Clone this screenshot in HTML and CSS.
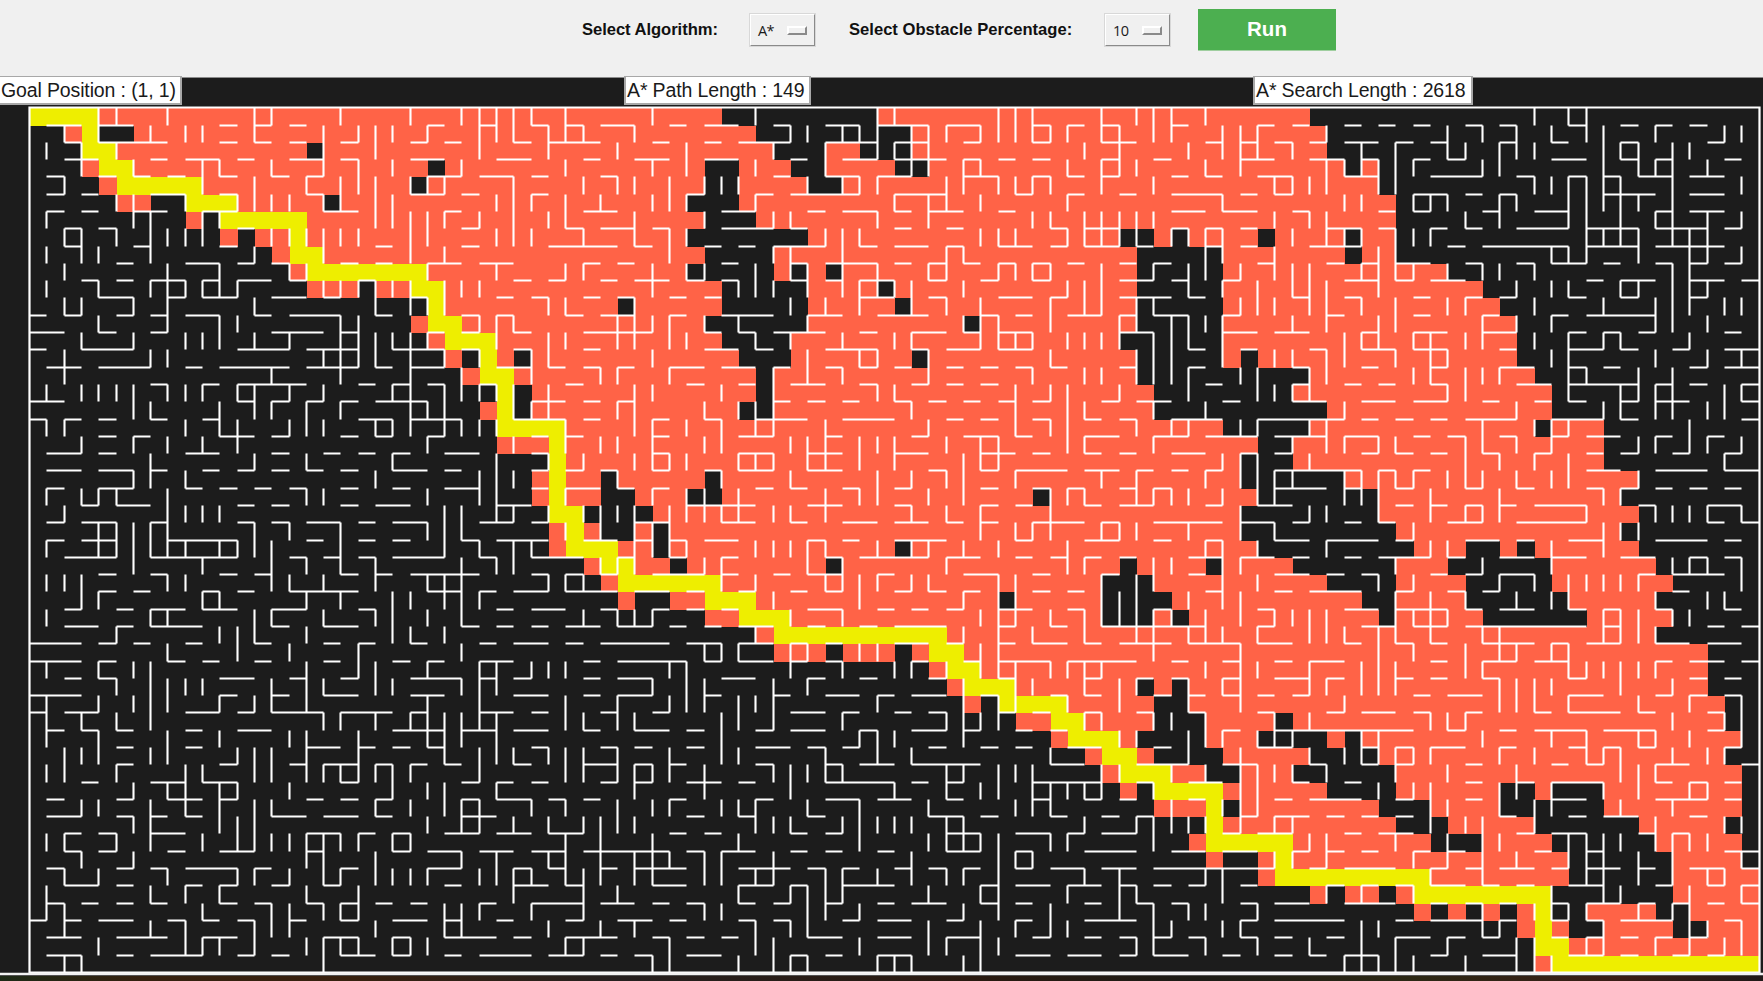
FILE: index.html
```html
<!DOCTYPE html>
<html lang="en">
<head>
<meta charset="utf-8">
<title>Maze Search</title>
<link rel="stylesheet" href="styles.css">
</head>
<body>
<header class="toolbar">
  <label class="caption algo">Select Algorithm:</label>
  <button class="option first"><span>A*</span><i class="knob"></i></button>
  <label class="caption pct">Select Obstacle Percentage:</label>
  <button class="option second"><span>10</span><i class="knob"></i></button>
  <button class="run">Run</button>
</header>
<main class="board">
  <svg class="maze" id="maze" viewBox="0 77 1763 899" width="1763" height="899"></svg>
  <div class="status goal"><span>Goal Position : (1, 1)</span></div>
  <div class="status path"><span>A* Path Length : 149</span></div>
  <div class="status search"><span>A* Search Length : 2618</span></div>
</main>
<footer class="desk"></footer>
<script src="maze.js"></script>
</body>
</html>
```
FILE: styles.css
```css
* { box-sizing: border-box; }
body {
  margin: 0;
  width: 1763px;
  height: 981px;
  overflow: hidden;
  background: #1c1c1c;
  font-family: "Liberation Sans", Arial, sans-serif;
}
.toolbar {
  display: flex;
  align-items: flex-start;
  height: 77px;
  padding: 9px 0 0 582px;
  background: #f0f0f0;
}
.caption {
  font-weight: bold;
  font-size: 16.6px;
  line-height: 20px;
  margin-top: 11px;
  color: #111;
  white-space: nowrap;
}
.algo { width: 167px; letter-spacing: -.05px; }
.pct { width: 255px; }
.option {
  display: flex;
  align-items: center;
  justify-content: space-between;
  width: 67px;
  height: 34px;
  margin: 4px 0 0;
  padding: 0 7px;
  border: 2px solid;
  border-color: #fff #8a8a8a #8a8a8a #fff;
  outline: 1px solid #d8d8d8;
  outline-offset: -1px;
  background: #f0f0f0;
  font: 14.5px "Open Sans", "Noto Sans", sans-serif;
  color: #1a1a1a;
}
.option span { display: inline-block; letter-spacing: -.6px; }
.first { margin-right: 33px; }
.second { margin-right: 27px; }
.knob {
  width: 20px;
  height: 9px;
  border: 2px solid;
  border-color: #fff #8a8a8a #8a8a8a #fff;
  background: #f0f0f0;
}
.run {
  width: 138px;
  height: 42px;
  padding: 0 0 2px;
  border: 0;
  border-bottom: 1px solid #9fce9f;
  background: #4caf50;
  color: #fff;
  font: bold 20.5px "Liberation Sans", Arial, sans-serif;
}
.board { position: relative; height: 899px; background: #1c1c1c; }
.maze { display: block; }
.status {
  position: absolute;
  top: -1px;
  height: 29px;
  padding-left: 1px;
  border: solid #a8a8a8;
  border-width: 1px 2px 2px;
  background: #fff;
  color: #1a1a1a;
  font-size: 19.5px;
  letter-spacing: -.13px;
  line-height: 26px;
  white-space: nowrap;
}
.goal { left: 0; width: 182px; border-left: 0; }
.path { left: 624px; width: 187px; }
.search { left: 1253px; width: 220px; }
.desk {
  height: 5px;
  background: linear-gradient(90deg, #1d2a16, #35200f 8%, #38210f 20%, #26201f 35%, #2a1a10 55%, #1d1c16 68%, #2c2814 80%, #3a1d16 92%, #201918);
}
```
FILE: maze.js
```js
// Horizontal walls: one entry per grid line (1..49), as column ranges.
const H = [
"1-3 4-6 11-12 13-14 15-16 23-24 26-27 29-30 31-32 33-35 37-38 39-41 43-44 46-48 49-52 53-55 58-59 60-61 62-63 66-67 71-72 73-74 76-77 78-79 80-81 83-84 85-86 89-90 92-93 94-95 96-97",
"2-3 4-8 11-12 13-14 15-16 18-19 22-23 24-25 28-29 30-33 36-37 39-40 41-44 46-49 50-52 54-55 58-59 62-64 68-69 70-71 72-73 74-75 76-78 79-80 81-82 85-86 88-89 92-93 97-98",
"2-4 7-8 9-11 12-13 15-17 18-19 22-24 27-29 32-33 35-37 39-41 44-45 47-49 50-53 54-55 56-57 58-59 62-63 65-66 70-72 74-76 77-78 80-81 82-83 88-90 92-93 94-95 98-99",
"1-2 4-5 6-7 8-9 11-12 14-15 16-17 23-25 26-28 29-30 33-34 43-44 46-48 49-51 54-56 58-59 60-61 62-63 66-67 68-69 71-73 76-78 81-84 86-87 89-90 91-92 93-95 96-98",
"1-2 3-4 7-9 11-12 16-17 22-24 25-26 29-30 38-39 42-43 44-48 50-53 57-58 60-61 63-64 66-69 70-71 72-73 80-82 83-84 85-86 91-94 96-98",
"1-2 3-4 6-8 10-12 17-19 24-25 32-34 40-42 45-46 47-49 50-51 52-54 56-57 66-68 69-71 73-74 78-79 80-81 84-85 87-89 94-95 96-98",
"2-3 4-5 12-13 25-26 31-32 33-35 36-37 40-43 44-45 50-51 53-54 59-60 61-63 66-67 68-69 70-71 75-77 78-79 81-82 83-84 86-89 90-93 94-97 98-99",
"2-3 6-7 11-12 20-21 25-26 30-34 35-36 39-40 41-42 43-46 48-49 50-52 53-54 56-58 59-60 61-63 64-65 68-69 70-71 74-77 82-83 84-89 90-93 94-98",
"5-6 9-11 12-13 14-15 18-19 20-21 23-25 26-28 32-33 34-35 40-41 44-45 46-49 50-51 52-53 54-55 56-57 58-59 60-61 63-64 65-66 71-72 75-76 77-78 79-81 83-84 86-87 88-90 91-92 94-95 96-97 98-99",
"3-4 5-6 7-9 10-11 12-14 15-16 19-20 28-29 30-31 33-34 35-37 38-39 40-41 44-45 46-47 48-50 52-53 55-56 58-59 63-65 66-67 69-70 76-78 79-80 81-83 90-91 92-94 96-98 99-100",
"4-6 8-9 10-12 14-16 17-18 22-23 27-28 29-30 32-33 34-35 37-38 39-40 48-50 52-53 56-58 59-60 63-66 67-68 73-74 76-77 80-81 83-84 85-86 89-90 92-93 96-97",
"0-1 2-3 5-6 7-8 9-11 13-14 15-18 20-21 25-26 27-28 31-32 33-35 37-38 40-43 45-47 49-52 55-56 57-58 60-62 63-64 65-67 69-70 75-76 80-81 84-85 88-89 90-94",
"0-2 4-5 7-8 14-17 18-19 23-24 25-26 28-29 32-36 39-40 41-42 43-46 48-49 51-53 54-55 56-58 63-65 69-71 72-74 77-78 80-82 84-86 89-90 91-92 93-94 98-99",
"0-1 3-6 12-15 16-19 21-24 25-26 28-29 32-33 39-41 42-43 46-49 51-52 53-55 56-58 67-68 70-71 74-75 77-79 80-82 85-86 89-91 92-93 95-96 98-100",
"1-3 4-7 9-10 11-15 16-19 20-21 22-24 27-29 30-31 32-33 34-35 37-39 40-42 43-44 46-47 48-49 50-51 53-54 55-56 57-58 59-60 63-64 67-68 73-74 77-78 81-82 85-87 89-90 91-92 96-97 98-100",
"7-8 10-11 12-16 19-20 21-22 23-24 26-27 31-32 38-39 41-42 44-46 48-49 51-52 53-54 55-56 68-69 73-74 76-77 78-79 81-82 86-88 89-93 94-95 96-97 99-100",
"0-2 12-13 14-15 16-17 18-19 20-23 29-31 32-33 34-35 43-44 45-46 47-48 50-51 52-53 54-55 56-57 58-59 62-63 64-66 69-70 73-75 77-79 80-82 84-85 87-88 89-90 92-93 94-96 99-100",
"0-1 2-3 4-5 7-8 10-11 19-21 22-25 28-31 32-33 36-37 39-40 42-45 47-50 53-54 55-56 58-59 61-62 63-64 66-69 71-76 77-78 79-80 81-82 83-86 88-91 92-93 99-100",
"4-5 6-7 11-13 14-15 18-19 20-21 23-24 29-30 31-32 36-37 41-43 46-47 51-52 54-56 57-58 61-63 65-67 68-71 72-75 76-78 80-81 82-83 85-86 88-89 90-92 94-95 97-98",
"1-3 4-5 9-11 14-15 17-18 19-20 21-22 24-26 29-30 36-37 41-43 45-47 50-52 55-57 58-59 61-62 63-64 66-68 70-71 72-73 77-78 79-80 81-82 84-85 87-88 90-91 92-93 95-96 98-99",
"1-3 4-6 7-8 10-11 12-13 14-15 16-17 18-19 21-23 24-25 29-30 31-32 33-34 36-37 39-40 41-43 45-47 52-53 55-56 57-60 61-63 64-65 66-67 68-69 72-77 78-79 80-81 90-92 94-97 98-100",
"1-2 4-6 9-10 11-12 13-14 15-16 18-19 21-22 24-26 29-30 31-33 34-35 36-37 42-43 44-45 47-48 50-51 55-56 58-59 60-61 63-64 65-66 72-75 76-77 79-80 83-84 86-87 90-91 92-93 94-95 96-97 98-99",
"3-4 5-7 12-13 14-15 18-19 20-22 27-29 38-42 45-47 50-51 55-56 57-58 61-62 63-65 68-69 71-73 79-80 81-82 83-84 85-86 87-90 93-94 97-99",
"1-2 3-5 7-8 12-13 14-15 16-18 19-20 21-23 26-28 29-30 35-37 40-42 44-45 47-49 50-52 53-54 55-56 58-61 62-63 65-69 70-72 73-74 76-77 78-79 82-84 86-90 97-98 99-100",
"1-2 3-5 8-12 16-17 19-20 21-22 25-26 27-30 32-34 35-36 37-38 39-41 45-46 47-48 50-53 57-58 61-63 65-66 68-69 72-74 75-78 79-80 83-85 86-87 89-91 94-97 98-99",
"2-5 7-12 15-16 17-18 19-20 21-24 26-27 29-32 34-35 37-38 40-41 46-47 48-52 53-55 57-58 59-60 61-62 63-64 67-69 70-72 73-74 76-77 78-81 82-83 85-87 88-90 92-94 96-97 98-99",
"4-5 7-8 11-12 13-14 18-19 20-21 22-26 29-30 31-32 33-34 36-39 40-41 43-44 45-47 49-50 54-56 58-59 62-63 67-68 72-74 75-76 77-78 81-82 83-84 85-87 93-94 95-98",
"4-5 6-7 10-11 12-13 15-19 23-25 26-27 28-30 31-34 35-37 38-39 41-42 44-45 46-47 50-51 52-53 54-55 58-59 60-61 68-69 72-73 74-77 79-80 82-83 84-85 95-96",
"2-3 5-6 7-9 10-12 14-16 19-20 27-28 29-31 33-34 36-37 38-39 40-41 45-47 49-50 51-52 53-54 56-58 60-61 65-66 71-72 76-78 79-82 83-84 85-87 89-90 91-92 94-95 98-99",
"2-4 5-6 7-10 14-15 17-19 25-26 27-28 29-30 31-33 34-36 37-38 39-40 41-43 45-46 48-49 50-53 56-57 59-60 62-68 71-72 77-79 80-82 83-90 91-92 97-98 99-100",
"0-3 4-5 6-7 9-10 13-14 17-18 19-20 22-23 26-27 28-30 31-32 33-37 38-40 41-43 44-45 46-47 50-52 53-54 56-57 58-60 61-62 63-66 67-70 71-73 76-77 79-80 81-82 84-87 88-89 90-92 94-96 97-99",
"0-3 4-5 8-9 10-11 13-14 17-18 21-22 23-24 26-28 32-33 34-38 39-40 41-43 44-45 46-47 51-52 54-55 56-59 60-64 66-67 69-70 72-73 74-76 81-82 84-86 87-89 94-95 96-98 99-100",
"2-3 4-5 11-13 15-16 18-19 22-25 26-27 28-29 32-33 34-36 40-42 45-46 48-49 52-53 56-57 61-62 64-65 66-67 69-70 72-74 75-76 79-80 81-82 84-85 89-90 96-97 98-99",
"0-3 11-12 14-15 17-19 22-24 28-30 32-33 34-36 39-40 43-44 46-48 49-50 51-53 55-56 59-60 61-62 65-66 67-68 69-70 71-72 73-74 80-81 82-84 89-91 94-95 96-97 98-99",
"0-1 2-4 9-11 12-13 14-17 18-21 22-23 26-28 29-30 33-34 36-37 44-46 47-48 50-51 52-53 56-57 58-59 61-62 64-65 67-68 71-72 75-76 77-79 80-81 83-84 87-88 89-92 93-94 97-98",
"1-2 3-4 5-6 9-10 12-14 21-24 25-27 28-30 32-33 35-37 38-39 42-43 44-46 48-49 51-53 54-55 57-58 59-60 69-70 72-80 82-83 85-86 87-90 91-94 97-98",
"5-6 9-10 16-18 19-20 21-22 23-24 29-30 33-34 35-36 38-39 42-44 45-46 47-48 52-53 55-56 57-58 60-62 65-66 71-73 77-78 79-80 81-83 85-86 89-90 91-92 93-94 98-99",
"5-6 11-12 15-16 17-19 20-21 22-23 24-25 28-29 32-34 35-36 37-38 42-43 46-47 48-50 51-55 59-61 64-67 69-71 74-75 77-78 79-80 83-84 88-89 90-91 94-96 99-100",
"3-4 7-9 10-12 18-19 25-26 27-28 29-30 33-34 35-36 38-40 41-42 46-50 51-52 53-54 58-62 64-65 67-69 73-74 76-77 83-84 86-87 88-91 94-95 96-97 98-99",
"1-2 5-6 8-10 11-12 16-17 18-19 20-21 25-26 27-29 30-31 32-33 37-38 42-43 46-48 49-51 53-54 58-59 61-62 63-64 67-68 72-73 74-77 79-80 83-84 88-90 94-97 98-99",
"1-3 5-6 7-8 9-10 14-16 17-19 20-21 25-27 38-39 41-42 45-46 52-54 55-56 59-60 62-63 64-65 70-71 72-74 75-76 77-78 79-80 85-86 89-90 91-93 96-97",
"2-3 4-5 7-9 16-18 19-20 21-22 24-26 27-29 30-32 37-38 39-40 44-45 46-47 53-55 57-59 60-61 62-64 69-70 71-73 76-77 78-80 86-87 88-90 93-94 95-96",
"2-3 4-5 8-9 11-13 16-17 21-22 23-25 26-28 29-31 32-37 38-39 40-42 44-45 46-47 49-50 53-55 57-58 61-64 66-68 69-71 73-74 75-76 77-78 80-81 82-83 87-88 90-91 98-100",
"1-2 5-6 7-8 9-12 13-14 18-19 23-25 28-29 30-31 33-34 35-38 41-44 45-46 47-48 50-51 52-53 54-55 57-58 59-61 62-64 65-72 74-75 76-79 81-82 83-84 85-87 88-89 90-92 93-94 96-98 99-100",
"2-4 5-6 9-10 11-12 14-15 17-18 24-25 28-30 31-32 36-38 41-43 44-45 47-50 55-56 57-59 60-62 63-64 65-66 67-68 70-71 75-76 77-78 79-80 81-83 84-85 86-87 89-91 94-95 97-98 99-100",
"1-2 3-4 5-6 7-8 11-12 13-14 16-17 18-19 20-21 22-23 26-27 29-32 33-35 36-37 38-39 41-42 43-44 46-47 49-50 51-53 55-56 57-58 61-62 64-65 66-67 70-71 72-74 76-79 81-82 83-84 85-86 88-89 90-92 93-94 95-96 97-98 99-100",
"0-1 2-3 4-6 8-9 10-11 12-13 15-16 18-19 21-23 24-25 27-28 31-32 34-36 37-38 41-42 43-44 47-48 49-51 53-54 57-58 61-64 70-71 72-76 79-80 81-84 85-86 88-89 90-91 92-95 98-99",
"1-3 5-8 10-12 17-19 21-22 24-27 28-29 31-34 36-37 38-39 40-41 45-47 49-51 53-55 58-59 61-62 63-64 65-66 67-68 70-71 72-73 75-76 79-81 82-83 84-85 88-89 90-91 92-93 94-95 96-97",
"1-3 5-6 7-10 12-13 14-15 18-20 21-22 24-25 26-29 30-32 33-34 35-36 38-40 44-45 46-47 49-51 57-59 60-62 63-64 65-67 69-70 72-73 74-75 76-78 81-82 84-86 89-91 92-93 95-96 97-98"
];

// Vertical walls: one entry per row (0..49), as grid line numbers.
const V = [
"4 5 8 13 14 18 22 25 26 27 28 29 31 36 42 49 50 56 57 58 62 64 65 66 68 87 89 90",
"2 4 7 9 10 13 17 19 20 21 23 26 27 28 30 31 32 35 44 45 47 48 49 51 52 53 55 56 57 58 59 60 62 63 65 66 69 70 71 75 82 84 86 88 90 91 94 98 99",
"1 3 5 17 20 26 30 34 38 43 46 49 50 51 52 61 63 67 69 70 71 73 77 79 82 83 85 86 87 91 92 93 95 96",
"3 6 10 11 14 17 19 21 25 31 36 38 42 46 51 52 54 55 60 62 63 64 68 70 75 76 77 78 79 80 84 85 91 93 94 95 97",
"2 10 13 16 18 19 20 22 23 24 28 32 34 35 37 39 40 41 45 47 48 49 53 54 56 57 58 59 62 65 72 73 74 75 78 79 87 88 89 90 91 92 95 99",
"5 6 9 12 13 14 15 17 18 20 21 27 28 29 31 33 36 37 38 42 50 52 53 55 60 69 76 77 80 81 82 85 86 89 90 91 92 93 95",
"1 6 7 10 11 20 21 22 23 24 26 28 30 31 35 39 43 44 49 52 58 59 61 62 63 64 65 72 74 75 83 85 89 90 92 94 95 97 99",
"2 3 5 7 8 9 10 14 15 16 17 18 19 22 23 27 28 29 32 35 37 38 46 47 48 55 56 57 60 61 62 63 64 66 67 68 69 73 75 76 77 79 80 81 90 91 92 93 95 96 97",
"1 3 4 7 13 17 22 24 37 43 44 47 53 54 68 69 72 78 79 88 89 90 93 96 97 99",
"2 8 11 15 16 23 27 31 32 36 38 39 42 44 45 47 49 52 53 56 57 58 59 62 65 67 68 70 72 73 74 77 78 79 80 82 84 85 87 95 96",
"1 4 7 8 9 10 11 12 17 18 19 20 21 22 24 25 26 36 41 42 43 45 47 48 49 50 51 54 60 61 62 67 69 71 73 74 75 78 86 88 89 92 93 95 96 97",
"2 3 6 8 13 20 22 23 24 30 31 35 44 46 48 51 53 55 59 61 62 64 65 70 71 72 74 75 77 79 82 83 87 91 94 95 96 98 99",
"4 8 11 12 18 19 26 27 28 34 35 36 37 39 41 45 54 55 56 59 63 64 66 67 68 69 73 75 78 79 84 86 88 94 95 97",
"3 6 9 10 11 13 15 18 19 20 21 22 23 27 30 31 34 35 37 38 42 44 47 50 51 55 56 57 58 60 61 62 63 65 66 67 69 76 77 78 80 81 83 84 87 89 91 92 96",
"2 7 8 17 18 19 20 22 24 26 29 30 36 45 48 49 52 59 64 65 66 69 72 73 75 76 79 81 82 88 89 94 97 99",
"2 14 18 22 25 29 33 34 37 43 45 47 52 58 61 62 64 65 66 67 70 71 74 75 80 81 83 84 85 89 90 93 95",
"1 3 4 5 6 8 9 10 12 13 15 17 21 22 24 25 26 27 28 30 35 36 40 43 49 50 57 59 60 63 67 71 72 73 74 82 83 89 92 93 94 95 98 99",
"6 7 11 13 14 16 18 22 23 24 28 29 30 34 35 39 41 42 43 51 57 60 61 65 68 76 86 91 92 94 95 97 98",
"1 2 9 11 12 15 16 17 20 21 22 24 25 26 27 31 35 36 38 40 42 43 46 52 57 59 60 64 66 67 70 71 74 75 84 87 88 89 96",
"3 6 8 10 12 23 28 31 33 34 36 39 40 44 45 46 48 49 50 53 55 56 60 61 65 73 75 76 78 79 83 84 86 88 93 94 96 97 99",
"7 13 16 21 27 30 32 35 36 37 38 41 42 43 45 46 48 50 54 55 56 69 70 71 74 83 85 87 89 98",
"6 7 9 20 26 27 28 34 40 44 49 51 53 54 57 62 64 68 70 71 72 73 76 77 78 79 80 82 83 84 86 88 89 93",
"1 3 4 5 8 16 17 23 26 27 31 36 38 39 41 46 48 49 52 54 59 60 61 64 65 66 67 69 71 72 76 77 78 81 85 91 92",
"2 8 9 10 11 24 25 27 28 30 32 33 34 35 37 38 39 40 41 43 44 46 51 53 55 59 70 74 75 78 81 83 84 85 90 94 95 96 97 99",
"4 5 6 7 8 13 15 18 23 24 25 31 33 35 36 37 55 57 58 59 62 63 64 67 70 72 80 91 92 93",
"1 4 5 6 7 8 9 11 12 13 14 18 24 26 28 29 35 36 37 38 42 43 44 45 46 49 51 52 54 56 60 68 69 71 75 81 82 88 91",
"6 10 14 16 18 20 25 27 28 33 34 35 39 40 45 47 53 60 61 65 66 69 70 79 84 88 95 96 97 99",
"1 2 3 8 9 14 15 17 20 23 24 25 30 31 32 40 42 46 47 48 49 51 52 56 57 62 64 65 69 71 78 80 85 87 89 90 91 92 93 99",
"3 4 10 11 16 18 21 22 24 25 26 43 48 54 56 57 62 63 64 67 69 70 79 81 83 86 88 89 94 97 98",
"1 7 8 13 14 17 20 21 23 25 32 34 35 36 44 47 55 56 57 59 61 62 63 64 65 66 68 70 72 73 74 75 79 80 81 82 91 92 93 95 96",
"5 11 12 13 16 21 22 24 42 54 56 58 61 64 65 67 68 69 71 74 75 76 78 79 81 84 85 91 92 93 94",
"8 12 15 19 25 39 40 41 44 45 48 49 55 56 65 70 78 80 83 85 86 88 89",
"1 4 6 7 16 19 20 23 26 27 29 30 31 37 38 44 47 50 51 53 55 56 57 59 60 61 62 68 70 71 74 77 78 79 83 84 89 90 91 92 93 94",
"5 7 8 9 10 14 16 17 20 21 25 26 27 36 38 39 43 45 54 57 58 61 63 64 67 69 70 74 75 77 78 79 85 86 87 88 92 95",
"1 4 6 7 8 11 13 14 16 23 26 31 34 37 38 39 41 42 43 49 54 56 57 60 63 67 70 76 85 86 87 89 93 96 99",
"1 3 5 7 17 18 20 22 23 24 25 26 27 31 32 34 35 40 41 43 47 53 54 55 56 61 62 65 66 68 72 74 81 82 83 95 98 99",
"1 4 8 11 15 16 19 23 24 25 27 40 48 49 50 54 63 64 67 68 69 71 72 73 77 78 84 88 90 93 94 96 99",
"2 3 4 7 8 12 13 14 16 19 24 26 27 28 30 31 32 34 37 40 41 46 49 51 59 67 70 74 76 77 78 79 80 81 85 87 90 91 92 95 97 98",
"1 2 5 9 10 13 14 16 17 18 19 20 21 22 26 31 32 34 35 36 37 39 43 44 45 46 47 53 54 56 57 58 62 63 66 68 70 71 72 73 75 79 82 86 92 93 94",
"6 8 9 11 12 15 21 23 24 27 35 39 44 50 53 55 56 58 59 60 61 62 65 70 71 78 80 81 85 86 88 91 93 96 97",
"3 4 7 9 11 13 14 20 22 24 25 26 29 31 34 36 37 40 41 42 45 48 52 57 58 59 66 69 70 71 81 82 85 87 88 92 95",
"6 7 11 12 13 23 25 26 28 30 32 33 34 35 42 43 44 47 48 49 50 51 53 54 61 64 65 66 67 68 70 72 73 81 83 84 87 94 98 99",
"1 2 5 7 10 12 13 14 15 16 17 18 19 21 22 31 33 36 41 48 52 53 54 55 56 59 60 65 74 75 79 82 84 85 89 90 91 92 94 95 96 97",
"3 6 16 17 20 25 27 30 31 33 35 36 37 39 40 43 51 56 57 58 72 73 75 80 82 84 86 89 90 91 93 95 99",
"2 4 8 12 13 15 17 18 20 21 22 23 26 27 28 29 31 32 33 35 36 39 40 42 43 46 47 49 51 53 54 56 61 63 68 69 81 84 90 91 93 95 97 98",
"1 7 9 11 16 19 28 32 34 41 44 45 46 47 52 55 56 60 63 64 69 75 77 80 88 91 92 96 99",
"1 2 10 14 15 17 18 19 24 25 26 29 32 39 40 45 46 48 54 56 59 63 65 67 68 71 84 87 88 89 90 93 95 96",
"2 7 9 13 14 15 20 24 25 30 33 35 42 44 45 52 55 57 59 60 65 66 69 70 77 78 84 85 91 96 97 99",
"4 9 10 11 13 16 17 18 19 21 22 23 31 32 37 42 43 48 52 53 55 56 64 65 68 71 74 77 79 82 86 87 90 91 94 96 98 99",
"2 3 17 36 37 41 43 44 45 49 50 51 54 55 76 77 78 79 80 83 86 87 88"
];

// Cell states per row as runs: k = open, r = visited, y = path, number = end column.
const CELLS = [
"y4 r40 k49 r74",
"k2 r3 y4 k6 r42 k51 r75",
"k3 y5 r16 k17 r43 k46 r48 k51 r75",
"k3 r4 y6 r23 k24 r39 k41 r44 k46 r50 k52 r76 k77 r78",
"k4 r5 y10 r22 k23 r39 k41 r45 k47 r78",
"k5 r7 k9 y12 r17 k18 r38 k41 r79",
"k9 r10 k11 y16 r39 k42 r79",
"k11 r12 k13 r15 y16 r38 k45 r63 k65 r66 k67 r71 k72 r76 k77 r79",
"k14 r15 y17 r39 k43 r64 k69 r76 k77 r79",
"k15 r16 y23 r38 k43 r44 k45 r46 k47 r64 k69 r82",
"k16 r19 k20 r22 y24 r40 k45 r49 k50 r64 k69 r84",
"k23 y24 r34 k35 r40 k45 r50 k51 r64 k69 r85",
"k22 r23 y25 r39 k45 r54 k55 r64 k69 r86",
"k23 r24 y27 r40 k44 r63 k69 r86",
"k24 r25 k26 y27 r28 k29 r41 k44 r51 k52 r64 k69 r70 k71 r86",
"k25 r26 y28 r42 k43 r64 k74 r87",
"k27 y28 k29 r42 k43 r65 k73 r88",
"k26 r27 y28 k29 r41 k43 r65 k75 r88",
"k27 y31 r69 k74 r87 k88 r91",
"k27 r30 y31 r71 k73 r91",
"k30 y31 r70 k73 r91",
"k29 r30 y31 r33 k34 r39 k40 r70 k76 r93",
"k29 r30 y31 r33 k35 r38 k40 r58 k59 r71 k78 r92",
"k30 y32 k33 k35 k36 r70 k78 r93",
"k30 r31 y32 r33 k35 r36 k37 r70 k79 r92",
"k30 r31 y34 r36 k37 r50 k51 r71 k80 r83 k85 r86 k87 r93",
"k32 r33 y35 r37 k38 r46 k47 r63 k64 r68 k69 r73 k79 r82 k88 r94",
"k33 r34 y40 r62 k65 r75 k79 r83 k88 r95",
"k34 r35 k37 r39 y42 r56 k57 r62 k66 r77 k79 r83 k89 r94",
"k39 r41 y44 r62 k65 r66 k67 r78 k79 r84 k90 r95",
"k42 r43 y53 r94",
"k43 r46 k47 r50 k51 r52 y54 r97",
"k52 r53 y55 r97",
"k53 r54 y57 r64 k65 r66 k67 r97",
"k54 r55 k56 y60 r65 k67 r98",
"k57 r59 y61 r65 k68 r72 k73 r98",
"k59 r60 y63 r64 k68 r71 k75 r76 k77 r99",
"k61 r62 y64 r65 k69 r74 k78 r98",
"k62 r63 y66 r68 k70 r73 k79 r99",
"k63 r64 k65 y69 r75 k79 r85 k87 r88 k91 r99",
"k65 r68 y69 k70 r78 k81 r85 k91 r99",
"k68 y69 r79 k82 r87 k93 r98",
"k67 r68 y73 r81 k84 r88 k94 r99",
"k68 r69 k71 r72 y73 r89 k95 r99",
"k71 r72 y81 r89 k95 r100",
"k74 r75 k76 r78 k79 r80 y88 k95 r100",
"k80 r81 k82 r83 k84 r85 k86 r87 y88 k90 r94 k96 r100",
"k86 r87 y88 r89 k91 r95 k97 r100",
"k87 y89 r100",
"k87 r88 y100"
];

// Grid lines sit on pixel centres so every wall has the same weight.
const X = i => Math.floor(29.6 + 17.295 * i) + 0.5;
const Y = j => Math.floor(107.8 + 17.29 * j) + 0.5;

const fills = { r: "", y: "" };
CELLS.forEach((row, j) => {
  let start = 0;
  row.split(" ").forEach(run => {
    const end = +run.slice(1);
    if (run[0] !== "k") {
      fills[run[0]] += `M${X(start)} ${Y(j)}H${X(end)}V${Y(j + 1)}H${X(start)}Z`;
    }
    start = end;
  });
});

let walls = "";
H.forEach((row, k) => row.split(" ").forEach(seg => {
  const [a, b] = seg.split("-").map(Number);
  walls += `M${X(a)} ${Y(k + 1)}H${X(b)}`;
}));
V.forEach((row, j) => row.split(" ").forEach(n => {
  walls += `M${X(+n)} ${Y(j)}V${Y(j + 1)}`;
}));

document.getElementById("maze").innerHTML =
  `<path d="M0 77.5H1763" stroke="#8c8c8c"/>` +
  `<path d="${fills.r}" fill="#ff6347" shape-rendering="crispEdges"/>` +
  `<path d="${fills.y}" fill="#eeee00" shape-rendering="crispEdges"/>` +
  `<path d="${walls}" stroke="#fff" stroke-width="2.1" fill="none"/>` +
  `<path d="M${X(0)} ${Y(0)}H${X(100)}V${Y(50)}H${X(0)}Z" stroke="#fff" stroke-width="2.2" fill="none"/>` +
  `<path d="M0 974H1763" stroke="#f2f2f2" stroke-width="2.4"/>`;
```
